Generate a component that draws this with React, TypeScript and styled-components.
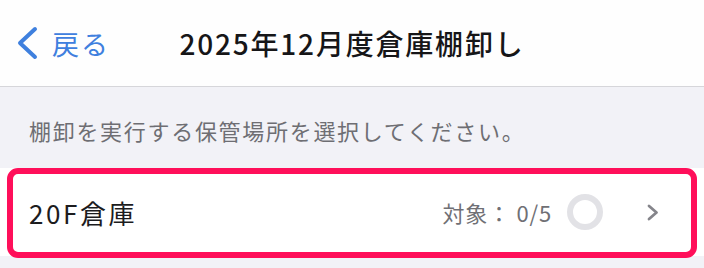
import React from "react";
import styled, { createGlobalStyle } from "styled-components";

const Global = createGlobalStyle`
  html, body { margin: 0; padding: 0; }
  body {
    background: #f2f2f7;
    font-family: "Noto Sans CJK JP", "Noto Sans", sans-serif;
    -webkit-font-smoothing: antialiased;
  }
`;

const Page = styled.div`
  width: 704px;
  height: 268px;
  overflow: hidden;
  background: #f2f2f7;
`;

const Header = styled.header`
  height: 86px;
  background: #fefefe;
  border-bottom: 1px solid #d6d6da;
  display: grid;
  grid-template-columns: 1fr auto 1fr;
  align-items: center;
`;

const Back = styled.button`
  justify-self: start;
  display: flex;
  align-items: center;
  gap: 13px;
  padding: 0 0 0 15px;
  margin: 0;
  border: 0;
  background: none;
  color: #3f80de;
  font-family: inherit;
  font-size: 27px;
  letter-spacing: 2px;
  line-height: 1;
  cursor: pointer;
`;

const Title = styled.h1`
  margin: 0;
  font-size: 28px;
  font-weight: 500;
  color: #161618;
  letter-spacing: 1.8px;
  line-height: 1;
`;

const Caption = styled.p`
  margin: 0;
  height: 81px;
  display: flex;
  align-items: center;
  padding: 4px 0 0 29px;
  box-sizing: border-box;
  font-size: 22px;
  letter-spacing: 1.7px;
  color: #6e6e73;
`;

const RowWrap = styled.div`
  position: relative;
  height: 88px;
  background: #ffffff;
`;

const Highlight = styled.div`
  position: absolute;
  left: 7px;
  right: 7px;
  top: 0;
  bottom: -2px;
  border: 6px solid #ff0f5a;
  border-radius: 11px;
  pointer-events: none;
`;

const Row = styled.div`
  height: 100%;
  display: flex;
  align-items: center;
  padding: 0 44px 0 29px;
  box-sizing: border-box;
`;

const Name = styled.span`
  flex: 1;
  font-size: 26px;
  color: #1c1c1e;
  letter-spacing: 2.6px;
`;

const Count = styled.span`
  font-size: 22px;
  color: #707075;
  letter-spacing: 0.8px;
  margin-right: 15px;
`;

const Ring = styled.span`
  width: 36px;
  height: 36px;
  box-sizing: border-box;
  border-radius: 50%;
  border: 6px solid #e2e2e6;
  margin-right: 43px;
`;

const BackIcon = () => (
  <svg width="24" height="34" viewBox="0 0 24 34" fill="none">
    <path
      d="M20 3 L5 17 L20 31"
      stroke="currentColor"
      strokeWidth="4"
      strokeLinecap="round"
      strokeLinejoin="round"
    />
  </svg>
);

const Chevron = () => (
  <svg width="14" height="17" viewBox="0 0 14 17" fill="none">
    <path
      d="M3 2 L10.5 8.5 L3 15"
      stroke="#85858b"
      strokeWidth="2.8"
      strokeLinecap="round"
      strokeLinejoin="round"
    />
  </svg>
);

export default function App() {
  return (
    <Page>
      <Global />
      <Header>
        <Back>
          <BackIcon />
          戻る
        </Back>
        <Title>2025年12月度倉庫棚卸し</Title>
        <span />
      </Header>
      <Caption>棚卸を実行する保管場所を選択してください。</Caption>
      <RowWrap>
        <Row>
          <Name>20F倉庫</Name>
          <Count>対象： 0/5</Count>
          <Ring />
          <Chevron />
        </Row>
        <Highlight />
      </RowWrap>
    </Page>
  );
}
